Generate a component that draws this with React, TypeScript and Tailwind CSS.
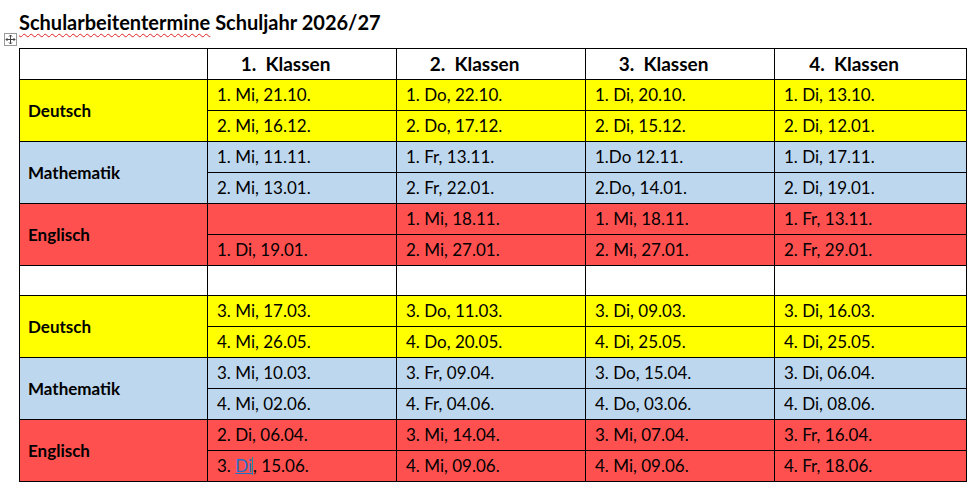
import React from "react";

type Row = { subject?: string; span?: number; bg: string; cells: React.ReactNode[] };

const Y = "bg-[#ffff00]";
const B = "bg-[#bdd7ee]";
const R = "bg-[#ff5050]";

const rows: Row[] = [
  { subject: "Deutsch", span: 2, bg: Y, cells: ["1. Mi, 21.10.", "1. Do, 22.10.", "1. Di, 20.10.", "1. Di, 13.10."] },
  { bg: Y, cells: ["2. Mi, 16.12.", "2. Do, 17.12.", "2. Di, 15.12.", "2. Di, 12.01."] },
  { subject: "Mathematik", span: 2, bg: B, cells: ["1. Mi, 11.11.", "1. Fr, 13.11.", "1.Do 12.11.", "1. Di, 17.11."] },
  { bg: B, cells: ["2. Mi, 13.01.", "2. Fr, 22.01.", "2.Do, 14.01.", "2. Di, 19.01."] },
  { subject: "Englisch", span: 2, bg: R, cells: ["", "1. Mi, 18.11.", "1. Mi, 18.11.", "1. Fr, 13.11."] },
  { bg: R, cells: ["1. Di, 19.01.", "2. Mi, 27.01.", "2. Mi, 27.01.", "2. Fr, 29.01."] },
];

const rows2: Row[] = [
  { subject: "Deutsch", span: 2, bg: Y, cells: ["3. Mi, 17.03.", "3. Do, 11.03.", "3. Di, 09.03.", "3. Di, 16.03."] },
  { bg: Y, cells: ["4. Mi, 26.05.", "4. Do, 20.05.", "4. Di, 25.05.", "4. Di, 25.05."] },
  { subject: "Mathematik", span: 2, bg: B, cells: ["3. Mi, 10.03.", "3. Fr, 09.04.", "3. Do, 15.04.", "3. Di, 06.04."] },
  { bg: B, cells: ["4. Mi, 02.06.", "4. Fr, 04.06.", "4. Do, 03.06.", "4. Di, 08.06."] },
  { subject: "Englisch", span: 2, bg: R, cells: ["2. Di, 06.04.", "3. Mi, 14.04.", "3. Mi, 07.04.", "3. Fr, 16.04."] },
  {
    bg: R,
    cells: [
      <span key="x">
        3. <span className="text-[#1f6fc6] underline decoration-[#1f6fc6] font-normal">Di</span>
        <span className="inline-block w-px h-[18px] bg-[#1a8fa8] align-middle -mt-[2px]" />, 15.06.
      </span>,
      "4. Mi, 09.06.",
      "4. Mi, 09.06.",
      "4. Fr, 18.06.",
    ],
  },
];

function Rows({ data }: { data: Row[] }) {
  return (
    <>
      {data.map((r, i) => (
        <tr key={i} className="h-[31px]">
          {r.subject && (
            <td rowSpan={r.span} className={`${r.bg} border border-black pl-[8px] font-bold text-[17px]`}>
              {r.subject}
            </td>
          )}
          {r.cells.map((c, j) => (
            <td key={j} className={`${r.bg} border border-black pl-[9px] text-[17px] leading-[20px] align-middle pb-[1px]`}>
              {c}
            </td>
          ))}
        </tr>
      ))}
    </>
  );
}

export default function App() {
  return (
    <div className="w-[970px] h-[487px] bg-white relative text-black" style={{ fontFamily: "Lato, 'Open Sans', sans-serif" }}>
      <div className="pl-[19px] pt-[8px] h-[32px]">
        <span className="font-bold text-[20px] leading-[28px]">
          <span className="underline decoration-wavy decoration-[#e02020] decoration-1 underline-offset-[3px]">Schularbeitentermine</span> Schuljahr 2026/27
        </span>
      </div>
      <div className="absolute left-[4px] top-[33px] w-[13px] h-[13px] border border-[#9a9a9a] bg-white flex items-center justify-center">
        <svg width="11" height="11" viewBox="0 0 11 11" fill="none" stroke="#444" strokeWidth="1">
          <path d="M5.5 1v9M1 5.5h9" />
          <path d="M4 2.5l1.5-1.5 1.5 1.5M4 8.5l1.5 1.5 1.5-1.5M2.5 4L1 5.5 2.5 7M8.5 4L10 5.5 8.5 7" />
        </svg>
      </div>
      <div className="pl-[19px] pt-[16px]">
        <table className="border-collapse table-fixed w-[947px]">
          <colgroup>
            <col className="w-[188px]" />
            <col className="w-[189px]" />
            <col className="w-[189px]" />
            <col className="w-[189px]" />
            <col className="w-[192px]" />
          </colgroup>
          <tbody>
            <tr className="h-[31px]">
              <td className="border border-black bg-white" />
              {["1.", "2.", "3.", "4."].map((n) => (
                <td key={n} className="border border-black bg-white text-center font-bold text-[19px] leading-[22px] pb-[1px] pr-[33px]">
                  {n}&nbsp; Klassen
                </td>
              ))}
            </tr>
            <Rows data={rows} />
            <tr className="h-[30px]">
              {[0, 1, 2, 3, 4].map((k) => (
                <td key={k} className="border border-black bg-white" />
              ))}
            </tr>
            <Rows data={rows2} />
          </tbody>
        </table>
      </div>
    </div>
  );
}
